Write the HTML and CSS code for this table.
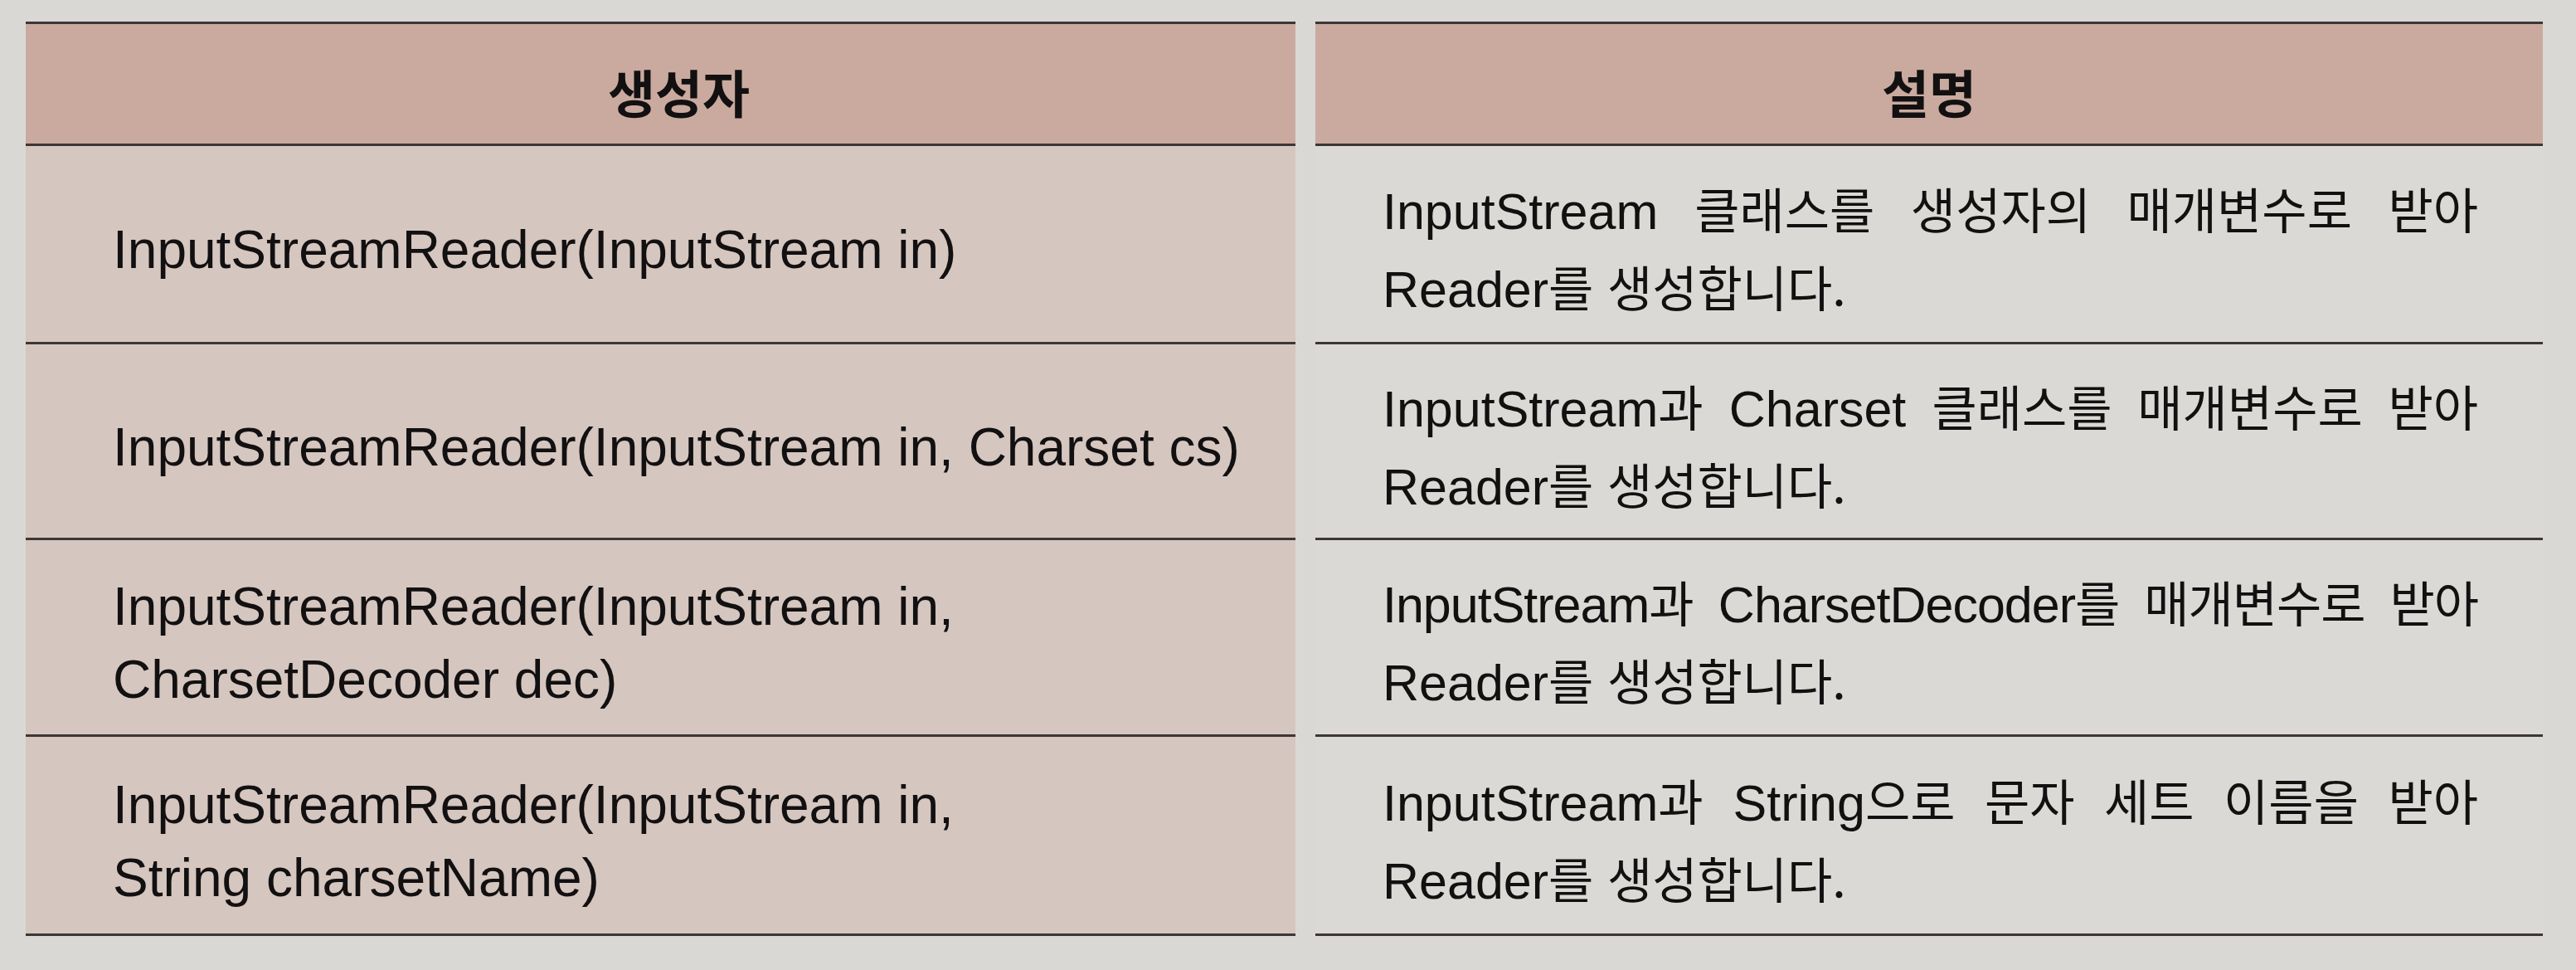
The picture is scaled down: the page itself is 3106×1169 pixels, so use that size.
FILE: index.html
```html
<!DOCTYPE html>
<html lang="ko">
<head>
<meta charset="utf-8">
<title>InputStreamReader 생성자</title>
<link rel="stylesheet" href="styles.css">
</head>
<body>
<div class="table">
  <div class="cell head head-left">생성자</div>
  <div class="cell head">설명</div>

  <div class="cell ctor"><div>InputStreamReader(InputStream in)</div></div>
  <div class="cell desc">
    <div class="l1">InputStream <span class="ko">클래스를 생성자의 매개변수로 받아</span></div>
    <div>Reader<span class="ko">를 생성합니다.</span></div>
  </div>

  <div class="cell ctor"><div>InputStreamReader(InputStream in, Charset cs)</div></div>
  <div class="cell desc">
    <div class="l1">InputStream<span class="ko">과</span> Charset <span class="ko">클래스를 매개변수로 받아</span></div>
    <div>Reader<span class="ko">를 생성합니다.</span></div>
  </div>

  <div class="cell ctor"><div>InputStreamReader(InputStream in,</div><div>CharsetDecoder dec)</div></div>
  <div class="cell desc">
    <div class="l1 tight">InputStream<span class="ko">과</span> CharsetDecoder<span class="ko">를 매개변수로 받아</span></div>
    <div>Reader<span class="ko">를 생성합니다.</span></div>
  </div>

  <div class="cell ctor"><div>InputStreamReader(InputStream in,</div><div>String charsetName)</div></div>
  <div class="cell desc">
    <div class="l1">InputStream<span class="ko">과</span> String<span class="ko">으로 문자 세트 이름을 받아</span></div>
    <div>Reader<span class="ko">를 생성합니다.</span></div>
  </div>
</div>
</body>
</html>
```

FILE: styles.css
```css
html, body {
  margin: 0;
  padding: 0;
}
body {
  background: #d9d8d4;
  width: 3106px;
  height: 1169px;
  overflow: hidden;
  font-family: "Liberation Sans", "Noto Sans CJK KR", sans-serif;
  color: #121010;
}
.table {
  display: grid;
  grid-template-columns: 1531px 1480px;
  grid-template-rows: 150px 239px 236px 237px 240px;
  column-gap: 24px;
  padding: 26px 0 0 31px;
}
.cell {
  box-sizing: border-box;
  border-bottom: 3px solid #3d3634;
  display: flex;
  flex-direction: column;
  justify-content: center;
}
.head {
  border-top: 3px solid #3d3634;
  background: #caaa9f;
  align-items: center;
  font-family: "Noto Sans CJK KR", sans-serif;
  font-weight: 700;
  font-size: 62px;
  line-height: 1;
  padding-top: 18px;
}
.head-left {
  padding-left: 44px;
}
.ctor {
  background: #d5c6c0;
  padding: 14px 0 0 105px;
  font-size: 64px;
  line-height: 88px;
}
.desc {
  background: #dbd9d5;
  padding: 12px 78px 0 81px;
  font-size: 61px;
  line-height: 90px;
}
.l1 {
  text-align: justify;
  text-align-last: justify;
  word-spacing: -6px;
}
.tight {
  letter-spacing: -1px;
}
.ko {
  font-family: "Noto Sans CJK KR", sans-serif;
  font-size: 59px;
}
```
